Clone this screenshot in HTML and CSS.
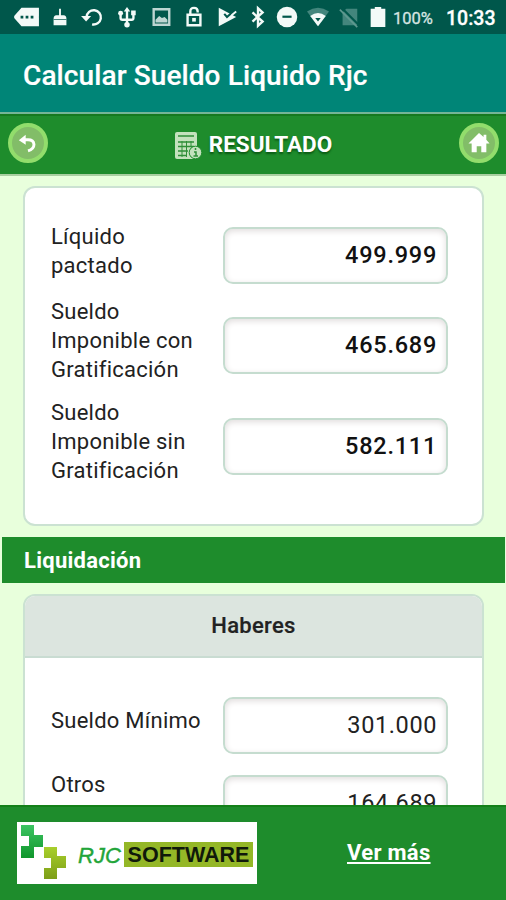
FILE: index.html
```html
<!DOCTYPE html>
<html lang="es">
	<head>
		<meta charset="UTF-8">
		<title>Calcular Sueldo Liquido Rjc</title>
		<link rel="stylesheet" href="styles.css">
	</head>
	<body>
		<div class="status">
			<div class="status-icons">
				<svg viewBox="0 0 24 24"><path d="M6 2h19v20H6L-2 13v-2z"/><path class="cut" d="M5 10.500h3v3H5zM10.500 10.500h3v3h-3zM16 10.500h3v3h-3z"/></svg>
				<svg viewBox="0 0 24 24"><path d="M11 3h2v7h3q3 0 3 4v7H5v-7q0-4 3-4h3z"/><path class="cut" d="M5 14.500h14v.8H5z"/></svg>
				<svg viewBox="0 0 24 24"><path class="line" d="M5 12A7.800 7.800 0 1 1 11 20"/><path d="M-1 11h11l-5.500 6z"/></svg>
				<svg viewBox="0 0 24 24"><path class="line" d="M12 5v16M5 8v5q0 2 2 2h10q2 0 2-2V9"/><path d="M8.500 6L12 1l3.500 5zM16.500 5h5v5h-5z"/><circle cx="5" cy="8" r="2.700"/><circle cx="12" cy="20.500" r="3"/></svg>
				<svg class="soft" viewBox="0 0 24 24"><path class="line" d="M4 3.500h17v17H4z"/><path d="M6 18v-3l4-4 3 2 3-1 3 3v3z"/></svg>
				<svg viewBox="0 0 24 24"><path class="line" d="M5 9.500h14V21H5zM8 9V6q0-4 4-4t4 4v1"/><path d="M10 13h4v4h-4z"/></svg>
				<svg viewBox="0 0 24 24"><path d="M3 2l19 10L3 22z"/><path class="cutline" d="M9 8.500l3 3.500L20 5"/><path class="line thin" d="M17 10l5-4"/></svg>
				<svg viewBox="0 0 24 24"><path class="line" d="M6 7l11 10-5 4.500V2.500L17 7 6 17"/></svg>
				<svg viewBox="0 0 24 24"><circle cx="12" cy="12" r="11.200"/><path class="cut" d="M7 10.500h10v2.400H7z"/></svg>
				<svg viewBox="0 0 24 24"><path class="faint" d="M0 6Q12-2 24 6L12 22z"/><path d="M3.500 11Q12 4 20.500 11L12 22z"/><path class="cut" d="M9 13h6l-3 4z"/></svg>
				<svg viewBox="0 0 24 24"><path class="faint" d="M9 3h12v18H5V7z"/><path class="cutline" d="M3 1l20 20"/><path class="line mid" d="M2 4l19 19"/></svg>
				<svg viewBox="0 0 24 24"><path d="M8.500 1h7v2H20v20H4V3h4.500z"/></svg>
			</div>
			<span class="battery">100%</span>
			<span class="clock">10:33</span>
		</div>
		<div class="appbar">Calcular Sueldo Liquido Rjc</div>

		<div class="header">
			<a class="round" href="#"><svg viewBox="0 0 24 24"><path class="line" d="M7 8.500h5q6 0 6.500 5 0 5-6.500 7"/><path d="M2 9L9.500 3v11z"/></svg></a>
			<h1>
				<svg class="calc" viewBox="0 0 28 28">
					<rect width="22" height="27" rx="2"/>
					<path class="ink" d="M3 4h16M3 10h16M3 14.500h16M3 19h10M3 23.500h9"/>
					<path class="ink thin" d="M7 9v16M11.500 9v16M16 9v6"/>
					<circle class="badge" cx="20.500" cy="20.500" r="6.300"/>
					<path class="ink" d="M20.500 16v2M19 20h2v4M18.500 24h4.500"/>
				</svg>
				<span>RESULTADO</span>
			</h1>
			<a class="round" href="#"><svg viewBox="0 0 24 24"><path d="M12 1l5 4.500V3h3v5.500l3.500 4H20V22h-5.500v-6.500h-5V22H4v-9.500H.5z"/></svg></a>
		</div>

		<div class="content">
			<div class="card totals">
				<div class="row two"><label>Líquido pactado</label><div class="value strong">499.999</div></div>
				<div class="row"><label>Sueldo Imponible con Gratificación</label><div class="value strong">465.689</div></div>
				<div class="row"><label>Sueldo Imponible sin Gratificación</label><div class="value strong">582.111</div></div>
			</div>
			<h2>Liquidación</h2>
			<div class="card detail">
				<h3>Haberes</h3>
				<div class="lines">
					<div class="row one"><label>Sueldo Mínimo</label><div class="value">301.000</div></div>
					<div class="row last"><label>Otros</label><div class="value">164.689</div></div>
				</div>
			</div>
		</div>

		<div class="footer">
			<div class="logo">
				<svg viewBox="0 0 46 55">
					<defs>
						<linearGradient id="green" x2="0" y2="1"><stop offset="0" stop-color="#3cc462"/><stop offset="1" stop-color="#10962c"/></linearGradient>
						<linearGradient id="olive" x2="0" y2="1"><stop offset="0" stop-color="#a8cf2c"/><stop offset="1" stop-color="#7d9e18"/></linearGradient>
					</defs>
					<path fill="url(#green)" d="M0 0h13v10h9v12h-9v11H0V21h8V11H0z"/>
					<path fill="url(#olive)" d="M23 22h13v9h9v12h-9v11H23V43h7V33h-7z"/>
				</svg>
				<i>RJC</i>
				<b>SOFTWARE</b>
			</div>
			<a class="more" href="#">Ver más</a>
		</div>
	</body>
</html>
```

FILE: styles.css
```css
*{
	margin: 0;
	padding: 0;
	box-sizing: border-box;
}
body{
	height: 900px;
	display: flex;
	flex-direction: column;
	overflow: hidden;
	font-family: Roboto, "Liberation Sans", sans-serif;
	font-size: 22px;
	color: #222;
	background: #e8ffdc;
}
a{color: #fff;}

.status{
	height: 34px;
	flex: none;
	display: flex;
	align-items: center;
	padding-left: 10px;
	background: #00574b;
	color: #fff;
	white-space: nowrap;
}
.status-icons{
	display: grid;
	grid-template-columns: 33px 33px 34px 34px 33px 34px 32px 29px 30px 32px 30px 28px;
	justify-items: center;
}
.status svg{width: 22px; height: 22px; fill: #f3faf8; overflow: visible;}
.status .line{fill: none; stroke: #f3faf8; stroke-width: 2.6;}
.status .thin{stroke-width: 2;}
.status .cut{fill: #00574b;}
.status .cutline{fill: none; stroke: #00574b; stroke-width: 2.2;}
.status .faint{fill: #43867d;}
.status .mid{stroke: #5f9990; stroke-width: 1.8;}
.status .soft{opacity: .78;}
.battery{width: 41px; margin: 2px 0 0 1px; font-size: 16.5px; color: #d5e5e2; -webkit-text-stroke: .3px #d5e5e2;}
.clock{margin: 2px 0 0 12px; font-size: 19.5px; font-weight: 500; -webkit-text-stroke: .3px #fff;}

.appbar{
	height: 78px;
	flex: none;
	padding-left: 23px;
	line-height: 84px;
	font-size: 28px;
	font-weight: 500;
	letter-spacing: .1px;
	-webkit-text-stroke: .2px #fff;
	color: #fff;
	background: #008577;
}

.header{
	height: 64px;
	flex: none;
	display: flex;
	justify-content: space-between;
	align-items: center;
	padding: 0 7px 3px 8px;
	background: #1e8c2c;
	border-top: 2px solid #74b596;
	border-bottom: 2px solid #a9cfa1;
	box-shadow: inset 0 2px #15791e;
}
.header h1{
	display: flex;
	align-items: center;
	gap: 6px;
	font-size: 22.5px;
	color: #fff;
	text-shadow: 0 2px 2px #0b5a14;
}
.header h1 span{margin-top: 3px;}
.calc{width: 28px; height: 28px; margin-top: 6px; fill: #c3e2bd;}
.calc .ink{fill: none; stroke: #2f8f38; stroke-width: 1.5;}
.calc .thin{stroke-width: 1;}
.calc .badge{stroke: #1e8c2c; stroke-width: 1;}
.round{
	width: 40px;
	height: 40px;
	display: flex;
	align-items: center;
	justify-content: center;
	border: 4px solid #92dd6c;
	border-radius: 50%;
	background: #82bd68;
}
.round svg{width: 22px; height: 22px; fill: #fff;}
.round .line{fill: none; stroke: #fff; stroke-width: 3.2;}

.content{
	flex: 1;
	min-height: 0;
	overflow: hidden;
	padding-top: 10px;
}
.card{
	margin: 0 22px 0 23px;
	border: 2px solid #cbe2d2;
	border-radius: 12px;
	background: #fff;
}
.totals{height: 340px; padding: 35px 34px 0 26px;}
.row{
	display: flex;
	align-items: flex-start;
	justify-content: space-between;
	height: 101px;
}
.row label{
	width: 155px;
	line-height: 28.8px;
	letter-spacing: .25px;
}
.row .value{margin-top: 19px;}
.row.two{height: 75px;}
.row.two .value{margin-top: 4px;}
.value{
	width: 225px;
	height: 57px;
	padding-right: 9px;
	border: 2px solid #c5dccf;
	border-radius: 10px;
	line-height: 53px;
	text-align: right;
	font-size: 23.5px;
	letter-spacing: .6px;
	box-shadow: inset 0 2px 6px #e0dcdc;
}
.strong{font-weight: 500; color: #111; letter-spacing: .75px;}
.content h2{
	height: 46px;
	margin: 11px 1px 11px 2px;
	padding-left: 22px;
	line-height: 47px;
	font-size: 22px;
	letter-spacing: .25px;
	color: #fff;
	background: #1e8c2c;
}
.detail{height: 300px; overflow: hidden;}
.detail h3{
	height: 62px;
	line-height: 59px;
	text-align: center;
	font-size: 22px;
	font-weight: 500;
	letter-spacing: .3px;
	-webkit-text-stroke: .2px #222;
	background: #dce5df;
	border-bottom: 2px solid #c9dcd2;
}
.lines{padding: 39px 34px 0 26px;}
.lines .value{margin-top: 0;}
.row.one{height: 78px;}
.row.one label{padding-top: 10px;}
.row.last label{margin-top: -4px;}

.footer{
	height: 95px;
	flex: none;
	display: flex;
	align-items: center;
	padding-left: 17px;
	background: #1e8c2c;
	border-top: 2px solid #148019;
}
.logo{
	width: 240px;
	height: 62px;
	margin-bottom: 2px;
	display: flex;
	align-items: center;
	padding-left: 4px;
	background: #fff;
	font-family: "Liberation Sans", Arial, sans-serif;
	font-size: 22px;
}
.logo svg{width: 46px; height: 55px;}
.logo i{width: 46px; margin: 6px 0 0 11px; color: #22a53a; white-space: nowrap; -webkit-text-stroke: .4px #22a53a;}
.logo b{
	width: 129px;
	height: 25px;
	margin-top: 4px;
	line-height: 26px;
	text-align: center;
	font-size: 21.5px;
	color: #10190a;
	background: #94b727;
}
.more{
	margin: 0 0 2px 90px;
	font-weight: bold;
	font-size: 22px;
	letter-spacing: .3px;
}
```
